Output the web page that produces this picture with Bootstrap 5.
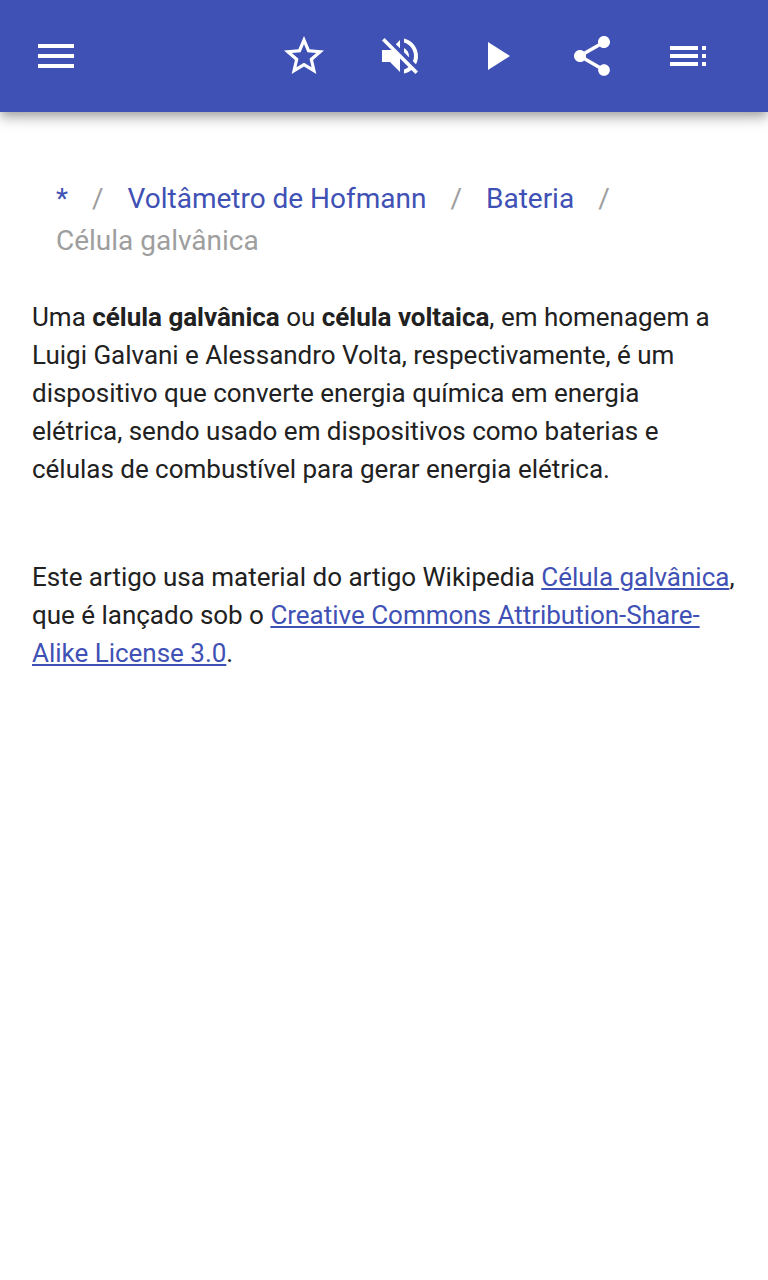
<!DOCTYPE html>
<html lang="pt">
<head>
<meta charset="utf-8">
<meta name="viewport" content="width=device-width, initial-scale=1">
<title>Célula galvânica</title>
<link href="https://cdn.jsdelivr.net/npm/bootstrap@5.3.0/dist/css/bootstrap.min.css" rel="stylesheet">
<style>
body{font-family:Roboto,sans-serif;color:#212121;background:#fff}
.topbar{height:112px;background:#3f51b5;color:#fff;padding:0 32px;box-shadow:0 4px 8px -2px rgba(0,0,0,.2),0 8px 10px 0 rgba(0,0,0,.14),0 2px 20px 0 rgba(0,0,0,.12)}
.tool{width:48px;height:48px;padding:0;border:0;color:inherit;background:none;line-height:0}
.tool svg{width:48px;height:48px;fill:currentColor;display:block}
.tools{gap:48px;margin-right:24px}
.crumbs{margin:64px 32px 0;padding:2px 24px 0;font-size:28px;line-height:42px;letter-spacing:-.01px}
.crumbs .breadcrumb-item{color:#9e9e9e}
.article a,.crumbs a{color:#3f51b5}
.crumbs .breadcrumb-item+.breadcrumb-item{padding-left:0}
.crumbs .breadcrumb-item:not(:last-child)::after{content:"/";padding:0 24px;color:#9e9e9e}
.crumbs .breadcrumb-item+.breadcrumb-item::before{content:none}
.article{padding:0 32px;font-size:26px;line-height:38px;letter-spacing:-.015px}
.article a{text-decoration-thickness:2px;text-underline-offset:2px}
.intro{margin:36px 0 0}
.credit{margin:70px 0 0}
</style>
</head>
<body>
<header class="topbar d-flex align-items-center justify-content-between">
<button class="tool btn" aria-label="Menu"><svg viewBox="0 0 24 24"><path d="M3 18h18v-2H3v2zm0-5h18v-2H3v2zm0-7v2h18V6H3z"/></svg></button>
<div class="tools d-flex">
<button class="tool btn" aria-label="Favorito"><svg viewBox="0 0 24 24"><path d="M22 9.24l-7.19-.62L12 2 9.19 8.63 2 9.24l5.46 4.73L5.82 21 12 17.27 18.18 21l-1.63-7.03L22 9.24zM12 15.4l-3.76 2.27 1-4.28-3.32-2.88 4.38-.38L12 6.1l1.71 4.04 4.38.38-3.32 2.88 1 4.28L12 15.4z"/></svg></button>
<button class="tool btn" aria-label="Som desligado"><svg viewBox="0 0 24 24"><path d="M16.5 12c0-1.77-1.02-3.29-2.5-4.03v2.21l2.45 2.45c.03-.2.05-.41.05-.63zm2.5 0c0 .94-.2 1.82-.54 2.64l1.51 1.51C20.63 14.91 21 13.5 21 12c0-4.28-2.99-7.86-7-8.77v2.06c2.89.86 5 3.54 5 6.71zM4.27 3L3 4.27 7.73 9H3v6h4l5 5v-6.73l4.25 4.25c-.67.52-1.42.93-2.25 1.18v2.06c1.38-.31 2.63-.95 3.69-1.81L19.73 21 21 19.73l-9-9L4.27 3zM12 4L9.91 6.09 12 8.18V4z"/></svg></button>
<button class="tool btn" aria-label="Reproduzir"><svg viewBox="0 0 24 24"><path d="M8 5v14l11-7z"/></svg></button>
<button class="tool btn" aria-label="Compartilhar"><svg viewBox="0 0 24 24"><path d="M18 16.08c-.76 0-1.44.3-1.96.77L8.91 12.7c.05-.23.09-.46.09-.7s-.04-.47-.09-.7l7.05-4.11c.54.5 1.25.81 2.04.81 1.66 0 3-1.34 3-3s-1.34-3-3-3-3 1.34-3 3c0 .24.04.47.09.7L8.04 9.81C7.5 9.31 6.79 9 6 9c-1.66 0-3 1.34-3 3s1.34 3 3 3c.79 0 1.5-.31 2.04-.81l7.12 4.16c-.05.21-.08.43-.08.65 0 1.61 1.31 2.92 2.92 2.92 1.61 0 2.92-1.31 2.92-2.92s-1.31-2.92-2.92-2.92z"/></svg></button>
<button class="tool btn" aria-label="Sumário"><svg viewBox="0 0 24 24"><path d="M3 9h14V7H3v2zm0 4h14v-2H3v2zm0 4h14v-2H3v2zm16 0h2v-2h-2v2zm0-10v2h2V7h-2zm0 6h2v-2h-2v2z"/></svg></button>
</div>
</header>
<main>
<nav aria-label="breadcrumb">
<ol class="breadcrumb crumbs">
<li class="breadcrumb-item"><a class="text-decoration-none" href="#">*</a></li>
<li class="breadcrumb-item"><a class="text-decoration-none" href="#">Voltâmetro de Hofmann</a></li>
<li class="breadcrumb-item"><a class="text-decoration-none" href="#">Bateria</a></li>
<li class="breadcrumb-item" aria-current="page">Célula galvânica</li>
</ol>
</nav>
<article class="article">
<p class="intro">Uma <b>célula galvânica</b> ou <b>célula voltaica</b>, em homenagem a Luigi Galvani e Alessandro Volta, respectivamente, é um dispositivo que converte energia química em energia elétrica, sendo usado em dispositivos como baterias e células de combustível para gerar energia elétrica.</p>
<p class="credit">Este artigo usa material do artigo Wikipedia <a href="#">Célula galvânica</a>, que é lançado sob o <a href="#">Creative Commons Attribution-Share-Alike License 3.0</a>.</p>
</article>
</main>
<script src="https://cdn.jsdelivr.net/npm/bootstrap@5.3.0/dist/js/bootstrap.bundle.min.js"></script>
</body>
</html>
